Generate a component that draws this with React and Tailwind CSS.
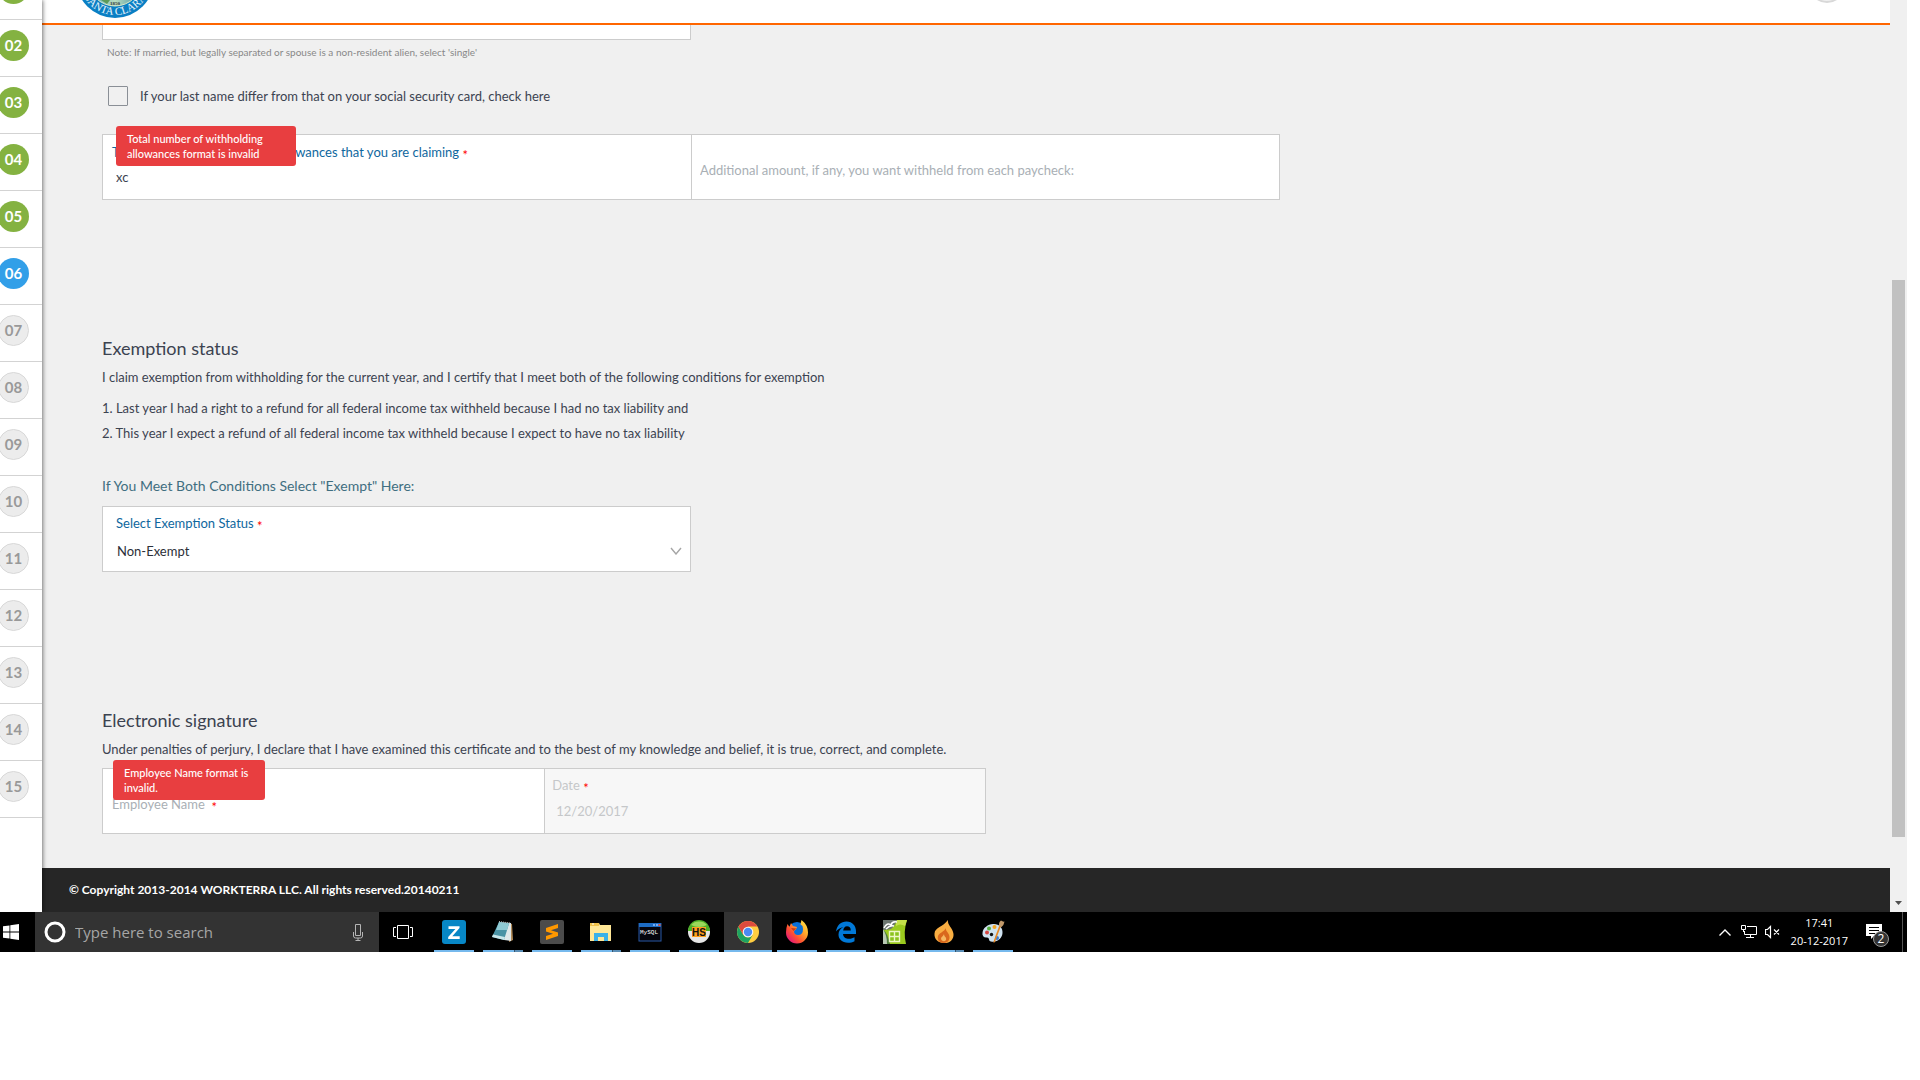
import { useState } from "react";

const steps = ["01", "02", "03", "04", "05", "06", "07", "08", "09", "10", "11", "12", "13", "14", "15"];
const currentStep = 6;

function stepStyle(num) {
    if (num < currentStep) return "bg-[#84b241] text-white";
    if (num === currentStep) return "bg-[#329fe8] text-white";
    return "bg-[#ececec] text-[#999] border border-[#d8d8d8]";
}

function Sidebar() {
    return (
        <nav aria-label="Steps" className="relative z-10 w-[42px] shrink-0 bg-white shadow-[1px_0_4px_rgba(0,0,0,0.5)]">
            <ol className="-mt-[37px]">
                {steps.map((s, i) => (
                    <li key={s} className="h-[57px] pt-[10px] border-b border-[#d3d3d3]">
                        <button className={"-ml-[2px] flex size-[31px] items-center justify-center rounded-full text-[15px] leading-none font-bold " + stepStyle(i + 1)}>
                            {s}
                        </button>
                    </li>
                ))}
            </ol>
        </nav>
    );
}

function Required() {
    return <span className="align-[-3px] leading-none text-[#f00]">*</span>;
}

function ErrorTip({ className, children }) {
    return (
        <div role="alert" className={"absolute -top-[9px] rounded-[3px] bg-[#e83e40] px-[11px] py-[5px] text-[11px] leading-[15px] font-medium text-white " + className}>
            {children}
        </div>
    );
}

function Header() {
    return (
        <header className="flex h-[25px] items-start justify-between overflow-hidden border-b-2 border-[#ff6600] bg-white pl-[33px] pr-[44px]">
            <svg width="80" height="19" viewBox="-40 21 80 19" aria-label="County of Santa Clara">
                <defs>
                    <path id="seal-arc" d="M-36 0 A36 36 0 0 0 36 0" />
                    <linearGradient id="seal-bg" x1="0" x2="1">
                        <stop offset="0" stopColor="#4aa3b8" />
                        <stop offset="0.5" stopColor="#b9dcc0" />
                        <stop offset="1" stopColor="#3f8d9e" />
                    </linearGradient>
                </defs>
                <circle r="39" fill="#0a7fc4" />
                <circle r="27" fill="url(#seal-bg)" stroke="#d9e8c8" strokeWidth="1" />
                <path d="M-14 21 L-5 21 L-8 25 Z" fill="#5c9a5a" />
                <text x="0" y="26" fontSize="5" textAnchor="middle" fill="#333" className="font-[Liberation_Serif,serif] font-bold">1850</text>
                <text fontSize="11" fill="#e8f4fa" className="font-[Liberation_Serif,serif]">
                    <textPath href="#seal-arc" startOffset="50%" textAnchor="middle">SANTA CLARA</textPath>
                </text>
            </svg>
            <svg width="38" height="4" viewBox="-19 15 38 4" aria-hidden="true">
                <circle r="17" fill="#f0f0f0" stroke="#d8d8d8" strokeWidth="2" />
            </svg>
        </header>
    );
}

function WithholdingForm() {
    const [allowances, setAllowances] = useState("xc");
    const [amount, setAmount] = useState("");
    const [status, setStatus] = useState("Non-Exempt");
    const [name, setName] = useState("");
    const [differs, setDiffers] = useState(false);

    return (
        <form className="pl-[60px] pr-[21px] pb-[34px] text-[13px] leading-5 text-[#3c4350]">
            <div className="h-[15px] w-1/3 border border-t-0 border-[#ccc] bg-white" />
            <p className="mt-1 pl-[5px] text-[10px] leading-4 text-[#888]">
                Note: If married, but legally separated or spouse is a non-resident alien, select 'single'
            </p>
            <div className="mt-[26px] flex items-center gap-3 pl-[6px]">
                <input id="differs" type="checkbox" checked={differs} onChange={e => setDiffers(e.target.checked)}
                       className="size-5 appearance-none rounded-[1px] border border-[#8a8f96] checked:bg-[#329fe8]" />
                <label htmlFor="differs">If your last name differ from that on your social security card, check here</label>
            </div>

            <div className="mt-7 flex h-[66px] w-2/3 border border-[#ccc] bg-white">
                <div className="relative flex-1 border-r border-[#ccc] pt-[7px] pl-[9px]">
                    <label htmlFor="allowances" className="block text-[#0f679e]">
                        Total number of withholding allowances that you are claiming <Required />
                    </label>
                    <input id="allowances" value={allowances} onChange={e => setAllowances(e.target.value)}
                           className="mt-[5px] block w-full pl-1 outline-none" />
                    <ErrorTip className="left-[13px] w-[180px]">Total number of withholding allowances format is invalid</ErrorTip>
                </div>
                <div className="flex flex-1 items-center pt-[6px] pl-2">
                    <input aria-label="Additional amount, if any, you want withheld from each paycheck:" value={amount}
                           onChange={e => setAmount(e.target.value)}
                           placeholder="Additional amount, if any, you want withheld from each paycheck:"
                           className="w-full outline-none placeholder:text-[#a9afb5]" />
                </div>
            </div>

            <h2 className="mt-[136px] text-lg leading-6">Exemption status</h2>
            <p className="mt-[7px]">
                I claim exemption from withholding for the current year, and I certify that I meet both of the following conditions for exemption
            </p>
            <ol className="mt-[9px] leading-[25px]">
                <li>1. Last year I had a right to a refund for all federal income tax withheld because I had no tax liability and</li>
                <li>2. This year I expect a refund of all federal income tax withheld because I expect to have no tax liability</li>
            </ol>
            <h3 className="mt-[30px] text-sm leading-5 text-[#3f6e80]">If You Meet Both Conditions Select "Exempt" Here:</h3>
            <div className="mt-[10px] h-[66px] w-1/3 border border-[#ccc] bg-white pt-[6px] pr-2 pl-[13px]">
                <label htmlFor="status" className="block text-[#0f679e]">Select Exemption Status <Required /></label>
                <div className="mt-2 flex items-center">
                    <select id="status" value={status} onChange={e => setStatus(e.target.value)}
                            className="flex-1 appearance-none pl-[1px] text-[#2b2f38] outline-none">
                        <option>Non-Exempt</option>
                        <option>Exempt</option>
                    </select>
                    <svg width="12" height="8" viewBox="0 0 12 8" fill="none" stroke="#a5a5a5" strokeWidth="1.4" className="pointer-events-none">
                        <path d="M1 1 L6 7 L11 1" />
                    </svg>
                </div>
            </div>

            <h2 className="mt-[136px] text-lg leading-6">Electronic signature</h2>
            <p className="mt-[7px]">
                Under penalties of perjury, I declare that I have examined this certificate and to the best of my knowledge and belief, it is true, correct, and complete.
            </p>
            <div className="mt-[9px] flex h-[66px] w-1/2 border border-[#ccc] bg-white">
                <div className="relative flex flex-1 items-center border-r border-[#ccc] pt-[6px] pl-[9px]">
                    <label htmlFor="name" className="text-[#a9afb5]">Employee Name &nbsp;<Required /></label>
                    <input id="name" value={name} onChange={e => setName(e.target.value)} className="min-w-0 flex-1 outline-none" />
                    <ErrorTip className="left-[10px] w-[152px]">Employee Name format is invalid.</ErrorTip>
                </div>
                <div className="flex-1 bg-[#f7f7f7] pt-[6px] pl-[7px] text-[#c5c7c9]">
                    <label htmlFor="date" className="block">Date <Required /></label>
                    <input id="date" value="12/20/2017" disabled className="mt-[6px] block w-full pl-1" />
                </div>
            </div>
        </form>
    );
}

function Scrollbar() {
    return (
        <div aria-hidden="true" className="grid w-[17px] shrink-0 grid-rows-[280fr_557fr_75fr] justify-items-center bg-[#f0f0f0]">
            <div />
            <div className="w-[13px] bg-[#c1c1c1]" />
            <div className="flex items-end pb-[7px]">
                <svg width="7" height="4" viewBox="0 0 7 4"><path d="M0 0 H7 L3.5 4 Z" fill="#505050" /></svg>
            </div>
        </div>
    );
}

const ZIcon = () => (
    <svg width="24" height="24" viewBox="0 0 24 24">
        <rect width="24" height="24" rx="3" fill="#0787c6" />
        <path d="M6.5 6.2 H17.5 V8 L10.3 16.2 H17.7 V19 H6.2 V17 L13.4 8.9 H6.5 Z" fill="#fff" />
    </svg>
);

const NotepadIcon = () => (
    <svg width="24" height="24" viewBox="0 0 24 24">
        <path d="M17 3 L21 4 L22 20 L18 22 Z" fill="#b08a58" />
        <path d="M8 2 L20 3 L20 21 L13 20 Z" fill="#dfe8ea" />
        <path d="M8 2 L18 3.5 L13 20 L1 17 Z" fill="#4a93a5" />
        <path d="M8 2 L18 3.5 L16 10 L5 10 Z" fill="#8fcad4" />
        <path d="M1 17 L13 20 L14 17 L2 14.5 Z" fill="#c9e6ea" />
        <path d="M8 1.5 L19 3" stroke="#bbb" strokeDasharray="1 1" />
    </svg>
);

const SublimeIcon = () => (
    <svg width="24" height="24" viewBox="0 0 24 24">
        <rect width="24" height="24" rx="2" fill="#4b4b4b" />
        <path d="M18 4 V8 L11 10.3 L18 12.5 V16 L6 20 V16 L13 13.7 L6 11.5 V8 Z" fill="#ff9800" />
    </svg>
);

const FolderIcon = () => (
    <svg width="24" height="24" viewBox="0 0 24 24">
        <path d="M1 3 H10 L11 5 H22 V21 H1 Z" fill="#ffe796" />
        <path d="M1 3 H10 V6 H1 Z" fill="#f0c24b" />
        <path d="M3 4 H5" stroke="#fff" />
        <path d="M5 21 V13 H19 V21 H15 V17 H9 V21 Z" fill="#3ab1e8" />
    </svg>
);

const MysqlIcon = () => (
    <svg width="24" height="24" viewBox="0 0 24 24">
        <rect x="1" y="3.5" width="22" height="17.5" fill="#05050d" stroke="#2859a5" />
        <rect x="1" y="3" width="22" height="4" fill="#1d6cc4" />
        <path d="M15 5 H17 M18 5 H20" stroke="#8fc1ff" strokeWidth="1.5" />
        <path d="M20.5 5 H22.5" stroke="#e9563d" strokeWidth="2" />
        <text x="2" y="13.5" fontSize="6" fill="#fff" className="font-[Liberation_Mono,monospace]">MySQL</text>
    </svg>
);

const HsIcon = () => (
    <svg width="24" height="24" viewBox="0 0 24 24">
        <circle cx="12" cy="12" r="11" fill="#e6e6e6" />
        <path d="M1 11 A11 11 0 0 1 23 11 Z" fill="#4caf28" />
        <path d="M4 5 A11 11 0 0 1 20 5 Q12 9 4 5" fill="#9bd95b" />
        <rect x="5" y="7" width="14" height="10" fill="#ffa01e" />
        <text x="12" y="15.5" fontSize="10" textAnchor="middle" fill="#111" className="font-[Liberation_Sans,sans-serif] font-bold">HS</text>
    </svg>
);

const ChromeIcon = () => (
    <svg width="24" height="24" viewBox="0 0 24 24">
        <circle cx="12" cy="12" r="11" fill="#ffcd41" />
        <path d="M2.5 6.5 L7.2 14.8 A5.5 5.5 0 0 0 16.8 14.8 L12 23 A11 11 0 0 1 2.5 6.5 Z" fill="#1da362" />
        <path d="M2.5 6.5 A11 11 0 0 1 21.5 6.5 H12 L7.2 14.8 Z" fill="#dd4b3e" />
        <circle cx="12" cy="12" r="5.3" fill="#f5f5f5" />
        <circle cx="12" cy="12" r="4.2" fill="#4a8af4" />
    </svg>
);

const FirefoxIcon = () => (
    <svg width="24" height="24" viewBox="0 0 24 24">
        <defs>
            <linearGradient id="ff" x1="1" y1="0" x2="0.1" y2="0.9">
                <stop offset="0" stopColor="#fff44f" />
                <stop offset="0.4" stopColor="#ffa52a" />
                <stop offset="0.7" stopColor="#ff4f32" />
                <stop offset="1" stopColor="#e0147e" />
            </linearGradient>
        </defs>
        <circle cx="12" cy="11" r="9" fill="#0a6fd8" />
        <path d="M2.5 4 L4.5 7 L6 3 L8 6 L12 7 L11 9.5 L9 11 Q9 15 13 15 Q18 15 18 9 L17.5 6 L15.5 4.5 Q16 1.5 16.5 0 Q23 5 23 12.5 A11 11 0 0 1 1 12.5 Q1 8 2.5 4 Z" fill="url(#ff)" />
        <path d="M6 8 L11.5 8.5 L8.5 11 Z" fill="#c93a12" />
    </svg>
);

const EdgeIcon = () => (
    <svg width="24" height="24" viewBox="0 0 24 24">
        <path d="M2 11.5 C3 5 7 1.5 12.5 1.5 C18.5 1.5 22 6 22 11 V14 H9 C9.3 17.5 12 18.8 15 18.8 C17.3 18.8 19 18.2 20.5 17.3 V21.2 C18.5 22.3 16.5 22.7 14 22.7 C8 22.7 4.5 19 4.5 14.5 C4.5 11 6.5 8.3 9.5 7 C6 7.5 3.8 9.5 2 11.5 Z M9.2 10.4 H16.8 C16.8 7.5 15.3 6.2 13 6.2 C10.8 6.2 9.5 8 9.2 10.4 Z" fill="#0078d7" fillRule="evenodd" />
    </svg>
);

const CalcIcon = () => (
    <svg width="24" height="24" viewBox="0 0 24 24">
        <path d="M0 0 H24 Q20 12 23 24 H0 Z" fill="#9ac91e" />
        <path d="M13 0 H24 L22 6 Q17 3 13 6 Z" fill="#c4e04a" />
        <path d="M0 9 Q5 14 7 24 H0 Z" fill="#4d7a3a" />
        <path d="M0 9 Q4 15 4 24 H0 Z" fill="#b9c8b4" />
        <path d="M0 0 H14 Q12 6 8 9 Q4 10 0 10 Z" fill="#6b756f" />
        <path d="M1 8 Q4 2 8 5 Q9 1 14 2 M3 9 Q7 5 11 6" fill="none" stroke="#fff" strokeWidth="1.5" />
        <path d="M6.5 11.5 H16.5 V21.5 H6.5 Z M11.5 11.5 V21.5 M6.5 16.5 H16.5" fill="#8bc31e" stroke="#eef7c8" strokeWidth="1.4" />
    </svg>
);

const FlameIcon = () => (
    <svg width="24" height="24" viewBox="0 0 24 24">
        <path d="M16 0 C15 5 21 8 21.5 14 C22 20 17 23.5 12 23 C6 23 2 19 2.5 13.5 C3 7 11 7 16 0 Z" fill="#f9ae42" />
        <path d="M14 8 C13 11 18 13 17.5 18 C17 22 14 23 11 23 C7 22.5 5 19.5 6 16 C7.5 12.5 12 12 14 8 Z" fill="#d9681d" />
        <path d="M12 14 C12 17 15 17 14 20 Q12 22.5 9.5 20 C8 17 11 17 12 14 Z" fill="#f5b860" />
    </svg>
);

const PaintIcon = () => (
    <svg width="24" height="24" viewBox="0 0 24 24">
        <path d="M12 4 C18 3.5 22 8 21.5 13 C21 19 16 22.5 10 21.5 C7 21 9 17.5 6 17.5 C3 18 1 16 1.5 13 C2 7.5 7 4.5 12 4 Z" fill="#cfe2f0" />
        <circle cx="6" cy="12.5" r="2" fill="#d64541" />
        <circle cx="8" cy="8.5" r="2" fill="#56ae3d" />
        <circle cx="13.5" cy="7" r="2" fill="#f5a623" />
        <circle cx="10.5" cy="14.5" r="1.7" fill="#111" />
        <circle cx="16" cy="18" r="2" fill="#3a7bd0" />
        <path d="M20 6 L14 22 L12.5 23 L13 20 L18.5 5 Z" fill="#e88824" />
        <path d="M18 6 Q17.5 2 20 0.5 Q22 2 23.5 1.5 Q23 5 20.5 7 Z" fill="#c29a6b" />
    </svg>
);

const apps = [
    { name: "Zoho", Icon: ZIcon },
    { name: "Notepad", Icon: NotepadIcon, stacked: true },
    { name: "Sublime Text", Icon: SublimeIcon },
    { name: "File Explorer", Icon: FolderIcon, stacked: true },
    { name: "MySQL", Icon: MysqlIcon },
    { name: "HeidiSQL", Icon: HsIcon },
    { name: "Chrome", Icon: ChromeIcon, active: true },
    { name: "Firefox", Icon: FirefoxIcon },
    { name: "Edge", Icon: EdgeIcon },
    { name: "Calc", Icon: CalcIcon },
    { name: "Flame", Icon: FlameIcon, stacked: true },
    { name: "Paint", Icon: PaintIcon }
];

function Taskbar() {
    return (
        <div className="flex h-10 bg-black text-white font-['Open_Sans',sans-serif]">
            <button aria-label="Start" className="w-[35px] pl-[3px]">
                <svg width="16" height="16" viewBox="0 0 16 16" fill="#fff">
                    <path d="M0 2.3 L6.5 1.4 V7.5 H0 Z M7.3 1.2 L16 0 V7.5 H7.3 Z M0 8.4 H6.5 V14.6 L0 13.7 Z M7.3 8.4 H16 V16 L7.3 14.8 Z" />
                </svg>
            </button>
            <div className="flex w-[344px] items-center bg-[#333] pl-[9px] pr-[15px]">
                <svg width="22" height="22" viewBox="0 0 22 22" fill="none" stroke="#fff">
                    <circle cx="11" cy="11" r="9" strokeWidth="3" />
                </svg>
                <input aria-label="Search" placeholder="Type here to search" className="ml-[9px] min-w-0 flex-1 text-[15px] leading-5 outline-none placeholder:text-[#a6a6a6]" />
                <svg width="12" height="18" viewBox="0 0 12 18" fill="none" stroke="#b5b5b5">
                    <path d="M3.5 1.5 H8.5 V12.5 H3.5 Z M1.5 9 V13 Q1.5 15 3.5 15 H8.5 Q10.5 15 10.5 13 V9 M6 15 V17 M3.5 17.5 H8.5" />
                </svg>
            </div>
            <button aria-label="Task view" className="mr-[3px] flex w-12 items-center justify-center">
                <svg width="20" height="14" viewBox="0 0 20 14" fill="none" stroke="#fff">
                    <path d="M4.5 0.5 H15.5 V13.5 H4.5 Z M3 2.5 H0.5 V11.5 H3 M17 2.5 H19.5 V11.5 H17" />
                </svg>
            </button>
            <div className="flex gap-px">
                {apps.map(({ name, Icon, active, stacked }) => (
                    <button key={name} aria-label={name} className={"flex w-12 flex-col items-center justify-between pt-2 " + (active ? "bg-[#333]" : "")}>
                        <Icon />
                        <span className={"flex h-[2px] justify-end bg-[#76b9ed] " + (active ? "w-full" : "w-10")}>
                            {stacked && <span className="w-[9px] border-l border-black/40 bg-[#5a8db5]" />}
                        </span>
                    </button>
                ))}
            </div>
            <div className="ml-auto flex items-center">
                <svg width="12" height="7" viewBox="0 0 12 7" fill="none" stroke="#fff" strokeWidth="1.4"><path d="M0.5 6.5 L6 1 L11.5 6.5" /></svg>
                <svg width="17" height="14" viewBox="0 0 17 14" fill="none" stroke="#fff" className="ml-[10px]">
                    <path d="M6 1.5 H15.5 V9.5 H3.5 V6 M9.5 9.5 V12.5 M5 12.5 H13 M0.5 0.5 H4.5 V4.5 H0.5 Z M2.5 4.5 V7" />
                </svg>
                <svg width="15" height="14" viewBox="0 0 15 14" fill="none" stroke="#fff" className="ml-[7px]">
                    <path d="M0.5 4.5 H2.5 L5.5 1.5 V12.5 L2.5 9.5 H0.5 Z M9 4.5 L14 9.5 M14 4.5 L9 9.5" strokeWidth="1.2" />
                </svg>
                <div className="ml-[11px] text-center text-[11px] leading-[18px]">
                    <div>17:41</div>
                    <div>20-12-2017</div>
                </div>
                <button aria-label="Notifications" className="relative ml-[18px] mr-[18px]">
                    <svg width="18" height="16" viewBox="0 0 18 16">
                        <path d="M0 0 H16 V12 H8 L5 15 V12 H0 Z" fill="#fff" />
                        <path d="M3 3.5 H13 M3 6.5 H13 M3 9.5 H9" stroke="#000" />
                    </svg>
                    <span className="absolute top-[7px] left-[7px] flex size-4 items-center justify-center rounded-full border border-[#999] bg-[#333] text-xs leading-none">2</span>
                </button>
                <div className="h-10 w-[5px] border-l border-[#555]" />
            </div>
        </div>
    );
}

export default function App() {
    return (
        <div className="mr-[13px] font-[Lato,sans-serif]">
            <div className="flex overflow-hidden">
                <Sidebar />
                <main className="min-w-0 flex-1 bg-[#f0f0f0]">
                    <Header />
                    <WithholdingForm />
                    <footer className="bg-[#262626] px-[27px] py-3 text-xs leading-5 font-bold text-white">
                        © Copyright 2013-2014 WORKTERRA LLC. All rights reserved.20140211
                    </footer>
                </main>
                <Scrollbar />
            </div>
            <Taskbar />
        </div>
    );
}
